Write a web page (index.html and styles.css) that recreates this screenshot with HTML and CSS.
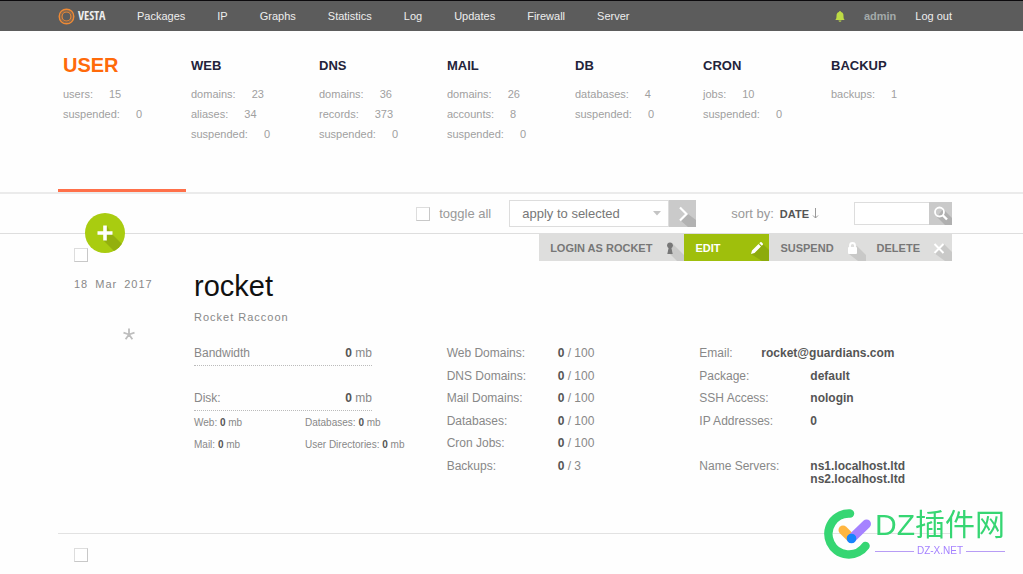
FILE: index.html
```html
<!DOCTYPE html>
<html lang="en">
<head>
<meta charset="utf-8">
<meta name="viewport" content="width=device-width, initial-scale=1">
<title>Vesta - User</title>
<link rel="stylesheet" href="styles.css">
</head>
<body>
<header class="topbar">
  <div class="container topbar-inner">
    <a class="logo" href="#">
      <svg width="17" height="17" viewBox="0 0 17 17" fill="none" stroke="#ef8a35" aria-hidden="true"><circle cx="8.500" cy="8.500" r="7.300" stroke-width="1.400"/><circle cx="8.500" cy="8.500" r="4.500" stroke-width="1.200"/><circle cx="8.500" cy="8.500" r="5.900" stroke-width="1" stroke-opacity=".35"/></svg>
      <span>VESTA</span>
    </a>
    <nav class="nav">
      <a href="#">Packages</a><a href="#">IP</a><a href="#">Graphs</a><a href="#">Statistics</a><a href="#">Log</a><a href="#">Updates</a><a href="#">Firewall</a><a href="#">Server</a>
    </nav>
    <div class="account">
      <button class="bell" type="button" aria-label="Notifications"><svg width="10" height="11" viewBox="0 0 10 11" fill="#bddb45"><path d="M5 0a1 1 0 0 1 1 1c2 .5 2.500 2 2.500 4 0 2 .3 3 1.200 4H.3c.9-1 1.200-2 1.200-4C1.500 3 2 1.500 4 1a1 1 0 0 1 1-1zM3.500 9.500h3a1.500 1.300 0 0 1-3 0z"/></svg></button>
      <a class="admin" href="#">admin</a>
      <a href="#">Log out</a>
    </div>
  </div>
</header>

<section class="stats">
  <div class="container stats-grid">
    <a class="stat active" href="#"><h2>USER</h2><p>users:<span>15</span></p><p>suspended:<span>0</span></p></a>
    <a class="stat" href="#"><h2>WEB</h2><p>domains:<span>23</span></p><p>aliases:<span>34</span></p><p>suspended:<span>0</span></p></a>
    <a class="stat" href="#"><h2>DNS</h2><p>domains:<span>36</span></p><p>records:<span>373</span></p><p>suspended:<span>0</span></p></a>
    <a class="stat" href="#"><h2>MAIL</h2><p>domains:<span>26</span></p><p>accounts:<span>8</span></p><p>suspended:<span>0</span></p></a>
    <a class="stat" href="#"><h2>DB</h2><p>databases:<span>4</span></p><p>suspended:<span>0</span></p></a>
    <a class="stat" href="#"><h2>CRON</h2><p>jobs:<span>10</span></p><p>suspended:<span>0</span></p></a>
    <a class="stat" href="#"><h2>BACKUP</h2><p>backups:<span>1</span></p></a>
  </div>
</section>

<section class="toolbar">
  <div class="container toolbar-inner">
    <button class="add" type="button" aria-label="Add user">
      <svg width="40" height="40" viewBox="0 0 40 40" aria-hidden="true"><defs><clipPath id="disc"><circle cx="20" cy="20" r="20"/></clipPath></defs><circle cx="20" cy="20" r="20" fill="#a9cc10"/><path clip-path="url(#disc)" d="M22 13l5 8 13 13v6H31L18 27l2-8z" fill="#93b00e"/><path d="M20 12.500v15M12.500 20h15" stroke="#fff" stroke-width="3.600"/></svg>
    </button>
    <label class="toggle"><input class="check" type="checkbox">toggle all</label>
    <form class="apply">
      <div class="select">
        <select aria-label="Bulk action"><option>apply to selected</option></select>
        <svg class="caret" width="8" height="5" viewBox="0 0 8 5" fill="#c4c4c4" aria-hidden="true"><path d="M0 0h8L4 4.500z"/></svg>
      </div>
      <button class="go" type="button" aria-label="Apply"><svg width="27" height="27" viewBox="0 0 27 27" fill="none"><path d="M12 7l7 7 8 6v7h-8l-8-7 6-6z" fill="#b2b2b2"/><path d="M11 7.500l6.500 6.500-6.500 6.500" stroke="#fff" stroke-width="2.200"/></svg></button>
    </form>
    <div class="sort">sort by: <button type="button">DATE</button><svg width="7" height="11" viewBox="0 0 7 11" fill="none" stroke="#999" aria-hidden="true"><path d="M3.500 0v10M1 7.500L3.500 10 6 7.500"/></svg></div>
    <form class="search">
      <input type="text" aria-label="Search">
      <button type="button" aria-label="Search"><svg width="23" height="23" viewBox="0 0 23 23" fill="none"><path d="M14 7l9 9v7h-7l-8-8z" fill="#b0b0b0"/><circle cx="10.500" cy="10" r="4.500" stroke="#fff" stroke-width="1.800"/><path d="M13.500 13l4.500 4.500" stroke="#fff" stroke-width="2.400"/></svg></button>
    </form>
  </div>
</section>

<main class="container">
  <article class="unit">
    <div class="side">
      <input class="check" type="checkbox" aria-label="Select rocket">
      <div class="date"><span>18</span><span>Mar</span><span>2017</span></div>
      <button class="star" type="button" aria-label="Add to favorites"><svg width="12" height="12" viewBox="0 0 12 12" stroke="#bdbdbd" stroke-width="1.800" fill="none"><path d="M6 6.500V.5M6 6.500L.5 4.700M6 6.500l5.500-1.800M6 6.500l-3.400 4.800M6 6.500l3.400 4.800"/></svg></button>
    </div>
    <div class="body">
      <div class="actions">
        <button type="button">LOGIN AS ROCKET<svg width="28" height="27" viewBox="0 0 28 27"><path d="M17 10l11 11v6h-7l-9-9z" fill="#c9c9c8"/><circle cx="14" cy="11.300" r="2.900" fill="#777"/><path d="M13 12h2l1.700 8h-5.400z" fill="#777"/></svg></button>
        <button type="button" class="edit">EDIT<svg width="28" height="27" viewBox="0 0 28 27"><path d="M21 9l7 7v11h-7l-11-7z" fill="#8dab0d"/><path d="M10 20l1-3.500 6.500-6.500 2.500 2.500-6.500 6.500zM18.300 9.200l1-1q.7-.5 1.300 0l1.200 1.200q.5.700 0 1.300l-1 1z" fill="#fff"/></svg></button>
        <button type="button">SUSPEND<svg width="28" height="27" viewBox="0 0 28 27"><path d="M19 12l9 9v6h-8l-9-7z" fill="#c9c9c8"/><rect x="10" y="13" width="9" height="7" rx="1" fill="#fff"/><path d="M12 13.500v-2a2.500 2.500 0 0 1 5 0v2" fill="none" stroke="#fff" stroke-width="1.800"/></svg></button>
        <button type="button">DELETE<svg width="28" height="27" viewBox="0 0 28 27"><path d="M20 10l8 8v9h-7L10 19z" fill="#c9c9c8"/><path d="M10.500 10l9 9m0-9l-9 9" stroke="#fff" stroke-width="2"/></svg></button>
      </div>
      <h1>rocket</h1>
      <p class="fullname">Rocket Raccoon</p>
      <div class="details">
        <div class="usage">
          <div class="meter"><span>Bandwidth</span><span><b>0</b> mb</span></div>
          <div class="meter disk"><span>Disk:</span><span><b>0</b> mb</span></div>
          <div class="parts">
            <span>Web: <b>0</b> mb</span><span>Databases: <b>0</b> mb</span>
            <span>Mail: <b>0</b> mb</span><span>User Directories: <b>0</b> mb</span>
          </div>
        </div>
        <dl class="facts">
          <dt>Web Domains:</dt><dd><b>0</b> / 100</dd>
          <dt>DNS Domains:</dt><dd><b>0</b> / 100</dd>
          <dt>Mail Domains:</dt><dd><b>0</b> / 100</dd>
          <dt>Databases:</dt><dd><b>0</b> / 100</dd>
          <dt>Cron Jobs:</dt><dd><b>0</b> / 100</dd>
          <dt>Backups:</dt><dd><b>0</b> / 3</dd>
        </dl>
        <dl class="facts">
          <div class="email"><dt>Email:</dt><dd><b>rocket@guardians.com</b></dd></div>
          <dt>Package:</dt><dd><b>default</b></dd>
          <dt>SSH Access:</dt><dd><b>nologin</b></dd>
          <dt>IP Addresses:</dt><dd><b>0</b></dd>
          <dt class="servers">Name Servers:</dt><dd class="servers"><b>ns1.localhost.ltd<br>ns2.localhost.ltd</b></dd>
        </dl>
      </div>
    </div>
  </article>
  <article class="unit">
    <div class="side"><input class="check" type="checkbox" aria-label="Select user"></div>
  </article>
</main>

<aside class="brand">
  <svg width="49" height="52" viewBox="0 0 49 52" fill="none" stroke-linecap="round" aria-hidden="true"><path d="M26 5.500A20.500 20.500 0 1 0 41.500 38" stroke="#36d673" stroke-width="8.500"/><path d="M19 22l8 8" stroke="#ffb640" stroke-width="9"/><path d="M27.500 30.500L42.500 16" stroke="#a582ff" stroke-width="9"/><circle cx="27.500" cy="30.500" r="4.800" fill="#1684fc"/></svg>
  <div class="brand-text"><div class="brand-name" lang="zh">DZ插件网</div><div class="brand-url">DZ-X.NET</div></div>
</aside>
</body>
</html>
```
FILE: styles.css
```css
* { box-sizing: border-box; }
body {
  margin: 0;
  background: #fefefe;
  color: #888;
  font: 12px/16px "Liberation Sans", Arial, sans-serif;
}
h1, h2, p, dl, dd { margin: 0; }
a { color: inherit; text-decoration: none; }
button { border: 0; padding: 0; background: none; font: inherit; color: inherit; cursor: pointer; }
svg { display: block; flex: none; }
.container { padding: 0 71px 0 58px; }

.topbar { background: #5c5c5c; border-top: 1px solid #0c0a0d; color: #eee; font-size: 11px; }
.topbar-inner { display: flex; align-items: center; height: 30px; }
.logo { display: flex; align-items: center; gap: 3px; width: 79px; }
.logo span { font: bold 12px/16px "Liberation Sans Narrow", "Open Sans Condensed", Roboto, sans-serif; }
.nav { display: flex; gap: 32px; }
.account { display: flex; align-items: center; gap: 19px; margin-left: auto; }
.admin { color: #a3aaaa; font-weight: bold; }

.stats { border-bottom: 2px solid #ebebeb; font-size: 11px; color: #a0a0a0; }
.stats-grid { display: grid; grid-template-columns: repeat(7, 1fr); padding-right: 69px; }
.stat { min-height: 161px; padding: 20px 0 0 5px; border-bottom: 3px solid transparent; }
.stat.active { border-color: #ff704a; }
.stat h2 { height: 28px; margin-bottom: 5px; color: #23233a; font-size: 13px; line-height: 30px; }
.stat.active h2 { color: #ff6a0a; font-size: 20px; line-height: 28px; }
.stat p { line-height: 20px; }
.stat span { margin-left: 16px; }

.toolbar { border-bottom: 1px solid #dedede; font-size: 13px; }
.toolbar-inner { position: relative; display: flex; align-items: center; justify-content: flex-end; height: 39px; }
.add { position: absolute; left: 85px; bottom: -20px; border-radius: 50%; }
.check {
  appearance: none; display: block; width: 14px; height: 14px; margin: 0;
  background: #fff; border: 1px solid #ddd; border-right-color: #c8c8c8; border-bottom-color: #c8c8c8;
}
.toggle { display: flex; align-items: center; gap: 9px; margin-right: 18px; color: #999; }
.apply { display: flex; margin-right: 35px; }
.select { position: relative; }
.select select {
  appearance: none; width: 160px; height: 27px; padding: 0 12px; background: #fff;
  border: 1px solid #ddd; border-radius: 0; color: #777; font: inherit;
}
.caret { position: absolute; right: 8px; top: 11px; }
.go { background: #cacaca; }
.sort { display: flex; align-items: center; margin-right: 35px; color: #999; }
.sort button { margin: 0 3px 0 6px; font-size: 11px; font-weight: bold; color: #555; }
.search { display: flex; }
.search input { width: 75px; height: 23px; border: 1px solid #ddd; border-right: 0; border-radius: 0; background: #fff; }
.search button { background: #cacaca; }

.unit { display: flex; }
.unit + .unit { border-top: 1px solid #e2e2e2; }
.side { width: 136px; padding: 14px 0 12px 16px; }
.date { display: flex; gap: 7px; margin-top: 14px; font-size: 11px; letter-spacing: 1px; }
.star { display: block; margin: 36px 0 0 49px; line-height: 0; }
.body { flex: 1; padding-bottom: 56px; }
.actions { display: flex; justify-content: flex-end; }
.actions button {
  display: flex; align-items: center; justify-content: space-between; gap: 4px;
  padding-left: 11px; background: #dededd; color: #777; font-size: 11px; font-weight: bold;
}
.actions .edit { width: 85px; background: #9fbf0c; color: #fff; }
h1 { margin-top: 8px; color: #111; font-size: 29px; font-weight: normal; line-height: 34px; }
.fullname { margin-top: 6px; font-size: 11px; letter-spacing: 1px; }
.details { display: grid; grid-template-columns: repeat(3, 1fr); margin-top: 17px; line-height: 23px; }
b { color: #555; }
.meter { display: flex; justify-content: space-between; width: 178px; height: 24px; border-bottom: 1px dotted #bbb; }
.disk { margin-top: 21px; }
.parts { display: grid; grid-template-columns: 111px auto; grid-auto-rows: 22px; font-size: 10px; white-space: nowrap; }
.facts { display: grid; grid-template-columns: 111px auto; grid-auto-rows: 23px 22px; }
.email { display: grid; grid-template-columns: 62px auto; grid-column: 1 / -1; }
.facts .servers { grid-row: 6; padding-top: 5px; line-height: 13px; }

.brand { position: fixed; right: 18px; bottom: 14px; display: flex; gap: 2px; }
.brand-name { color: #36d673; font: 400 30px/34px "Liberation Sans", "Noto Sans CJK SC", sans-serif; }
.brand-url { display: flex; align-items: center; gap: 3px; margin-top: 4px; color: #a582ff; font-size: 10px; line-height: 10px; }
.brand-url::before, .brand-url::after { content: ""; flex: 1; height: 1px; background: #b79cf5; }
```
